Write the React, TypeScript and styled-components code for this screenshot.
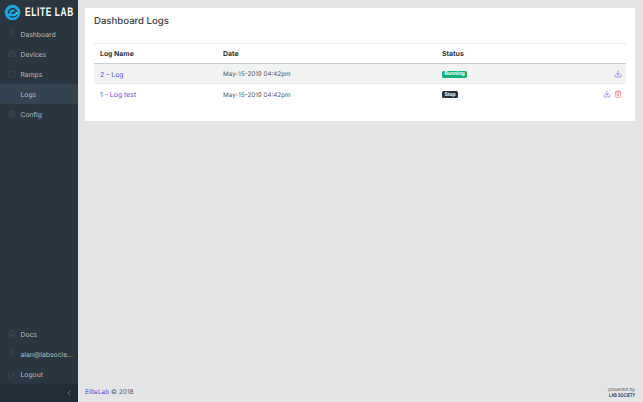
import React from "react";
import styled, { createGlobalStyle } from "styled-components";
import { User, HardDrive, SquareArrowOutUpRight, ChartLine, Settings, FileText, LogOut, ChevronLeft, Download, Trash2 } from "lucide-react";

const Global = createGlobalStyle`
  html, body { margin: 0; padding: 0; height: 100%; }
  body { font-family: Inter, "Open Sans", sans-serif; background: #e4e5e6; overflow: hidden; text-rendering: geometricPrecision; }
  #root { height: 100%; }
`;

const Page = styled.div`display: flex; width: 643px; height: 402px;`;
const Sidebar = styled.aside`width: 78px; flex: none; background: #29363f; display: flex; flex-direction: column;`;
const Brand = styled.div`height: 24px; display: flex; align-items: center; gap: 4px; padding-left: 4px; overflow: hidden;`;
const LogoMark = styled.svg`width: 17px; height: 17px; flex: none;`;
const BrandText = styled.span`font-family: "Liberation Sans", sans-serif; font-weight: 700; font-size: 12.5px; letter-spacing: 1px; color: #fff; white-space: nowrap; transform: scaleX(0.665); transform-origin: left;`;
const Nav = styled.nav`display: flex; flex-direction: column;`;
const NavGrow = styled.div`flex: 1;`;
const NavItem = styled.div<{ $active?: boolean }>`
  height: 20px; display: flex; align-items: center; gap: 4.5px; padding-left: 8px; padding-right: 5px;
  font-size: 6.8px; color: #b4bbc0; white-space: nowrap; overflow: hidden;
  background: ${p => (p.$active ? "#35454f" : "transparent")};
  svg { width: 8px; height: 8px; flex: none; color: ${p => (p.$active ? "#2b3f80" : "#3e4f5a")}; }
`;
const Collapse = styled.div`height: 18px; background: #212d35; display: flex; align-items: center; justify-content: flex-end; padding-right: 5px; color: #8a969e;`;
const Main = styled.main`flex: 1; display: flex; flex-direction: column; min-width: 0;`;
const Card = styled.section`margin: 8px 8px 0 7px; height: 113px; background: #fff; padding: 0 9px; box-sizing: border-box;`;
const Title = styled.h1`margin: 0; height: 35px; padding-top: 7px; box-sizing: border-box; font-size: 9.6px; line-height: 13px; font-weight: 500; color: #3a4248;`;
const Table = styled.div`border-top: 1px solid #e4e7ea;`;
const Row = styled.div<{ $head?: boolean; $shade?: boolean }>`
  display: grid; grid-template-columns: 123px 219px 1fr auto; align-items: center; box-sizing: border-box;
  height: 20px; padding: ${p => (p.$head ? "0" : "1px")} 4px 0 6px; font-size: 6.9px; color: #555b61;
  background: ${p => (p.$shade ? "#f1f2f2" : "transparent")};
  ${p => p.$head ? "border-bottom: 1px solid #c9d1d7; font-weight: 700; color: #30353a;" : "border-bottom: 1px solid #e4e7ea;"}
  &:last-child { border-bottom: 0; }
`;
const LogLink = styled.a`color: #5f4ae0;`;
const DateText = styled.span`font-size: 6.3px;`;
const Badge = styled.span<{ $tone: "green" | "dark" }>`
  justify-self: start; font-size: 5px; line-height: 6px; font-weight: 700; color: #fff; padding: 0.5px 2.5px; border-radius: 1.5px;
  background: ${p => (p.$tone === "green" ? "#10b27a" : "#27323a")};
`;
const Actions = styled.div`display: flex; gap: 3px; justify-content: flex-end; align-items: center; margin-top: -1px; svg { width: 8px; height: 8px; }`;
const FooterBar = styled.footer`margin-top: auto; height: 20px; display: flex; justify-content: space-between; align-items: center; padding: 0 8px 0 7px; font-size: 6.5px; color: #555b61;`;
const FootLink = styled.a`color: #5f4ae0;`;
const Powered = styled.div`display: flex; flex-direction: column; align-items: flex-end; font-size: 4.8px; line-height: 5px; color: #555c62; padding-top: 3px;`;
const Society = styled.span`font-family: "Liberation Sans", sans-serif; font-size: 5.4px; line-height: 7px; font-weight: 700; color: #1f3f73; white-space: nowrap; transform: scaleX(0.73); transform-origin: right;`;

const Logo = () => (
  <LogoMark viewBox="0 0 17 17" aria-hidden="true">
    <circle cx="8.5" cy="8.5" r="7.8" fill="#17a6e2" />
    <path d="M4.8 9.6a3.9 3.9 0 0 1 7.6-2L7.4 9.4" fill="none" stroke="#29363f" strokeWidth="1.8" />
    <path d="M6 12.2c2.2 1.3 5 1 7.3-1.3" fill="none" stroke="#29363f" strokeWidth="1.3" />
    <circle cx="12.4" cy="9.2" r="1.1" fill="#36e0d0" />
  </LogoMark>
);

export default function App() {
  return (
    <>
      <Global />
      <Page>
        <Sidebar>
          <Brand><Logo /><BrandText>ELITE LAB</BrandText></Brand>
          <Nav>
            <NavItem><User />Dashboard</NavItem>
            <NavItem><HardDrive />Devices</NavItem>
            <NavItem><SquareArrowOutUpRight />Ramps</NavItem>
            <NavItem $active><ChartLine />Logs</NavItem>
            <NavItem><Settings />Config</NavItem>
          </Nav>
          <NavGrow />
          <Nav>
            <NavItem><FileText />Docs</NavItem>
            <NavItem><User />alan@labsocie...</NavItem>
            <NavItem><LogOut />Logout</NavItem>
          </Nav>
          <Collapse><ChevronLeft size={8} /></Collapse>
        </Sidebar>
        <Main>
          <Card>
            <Title>Dashboard Logs</Title>
            <Table>
              <Row $head><span>Log Name</span><span>Date</span><span>Status</span><span /></Row>
              <Row $shade>
                <LogLink>2 - Log</LogLink><DateText>May-15-2019 04:42pm</DateText><Badge $tone="green">Running</Badge>
                <Actions><Download color="#7c6fe0" /></Actions>
              </Row>
              <Row>
                <LogLink>1 - Log test</LogLink><DateText>May-15-2019 04:42pm</DateText><Badge $tone="dark">Stop</Badge>
                <Actions><Download color="#7c6fe0" /><Trash2 color="#f0707f" /></Actions>
              </Row>
            </Table>
          </Card>
          <FooterBar>
            <span><FootLink>EliteLab</FootLink> © 2018</span>
            <Powered>powered by<Society>LAB SOCIETY</Society></Powered>
          </FooterBar>
        </Main>
      </Page>
    </>
  );
}
